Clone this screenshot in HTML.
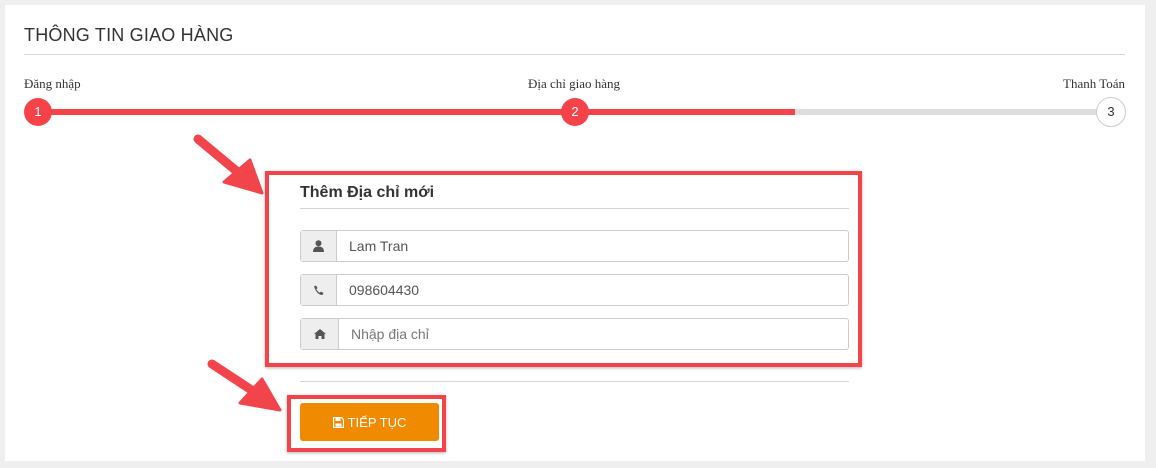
<!DOCTYPE html>
<html><head><meta charset="utf-8"><style>
*{box-sizing:border-box;margin:0;padding:0}
body{width:1156px;height:468px;background:#efefef;position:relative;overflow:hidden;font-family:"Liberation Sans",sans-serif;color:#333}
.card{position:absolute;left:5px;top:5px;width:1140px;height:456px;background:#fff}
.abs{position:absolute}
.title{left:24px;top:25px;font-size:18px;color:#333;letter-spacing:0.2px}
.hr{height:1px;background:#d5d5d5}
.lbl{top:76px;font-family:"Liberation Serif",serif;font-size:13px;color:#333}
.circ{width:28px;height:28px;border-radius:50%;background:#f6434a;color:#fff;font-size:13px;text-align:center;line-height:28px}
.inp{left:300px;width:549px;height:32px;border:1px solid #ccc;border-radius:3px;display:flex;background:#fff}
.inp .ad{width:36px;background:#eee;border-right:1px solid #ccc;display:flex;align-items:center;justify-content:center}
.inp .tx{padding-left:12px;line-height:30px;font-size:14px;color:#555}
</style></head><body>
<div class="card"></div>
<div class="abs title">THÔNG TIN GIAO HÀNG</div>
<div class="abs hr" style="left:24px;top:54px;width:1101px"></div>
<div class="abs lbl" style="left:24px">Đăng nhập</div>
<div class="abs lbl" style="left:528px">Địa chỉ giao hàng</div>
<div class="abs lbl" style="left:1063px">Thanh Toán</div>
<div class="abs" style="left:38px;top:109px;width:757px;height:6px;background:#f6434a"></div>
<div class="abs" style="left:795px;top:109px;width:305px;height:6px;background:#ddd"></div>
<div class="abs circ" style="left:24px;top:98px">1</div>
<div class="abs circ" style="left:561px;top:98px">2</div>
<div class="abs circ" style="left:1096px;top:97px;width:30px;height:30px;background:#fff;border:1px solid #ccc;color:#333;line-height:28px">3</div>

<div class="abs" style="left:265px;top:171px;width:597px;height:196px;border:4px solid #f2454b;box-shadow:0 1px 3px rgba(0,0,0,.3)"></div>
<div class="abs" style="left:300px;top:184px;font-size:16px;font-weight:bold;color:#333">Thêm Địa chỉ mới</div>
<div class="abs hr" style="left:300px;top:208px;width:549px"></div>
<div class="abs inp" style="top:230px"><div class="ad"><svg width="11" height="12" viewBox="0 0 11 12"><circle cx="5.5" cy="3.2" r="3" fill="#555"/><path d="M0 12 Q0 6.5 5.5 6.5 Q11 6.5 11 12Z" fill="#555"/></svg></div><div class="tx">Lam Tran</div></div>
<div class="abs inp" style="top:274px"><div class="ad"><svg width="11" height="11" viewBox="0 0 11 11"><path d="M1 1.5 L3 0.5 L4.5 3 L3.3 4.2 Q4.5 6.5 6.8 7.7 L8 6.5 L10.5 8 L9.5 10 Q4 10 1 1.5Z" fill="#555"/></svg></div><div class="tx">098604430</div></div>
<div class="abs inp" style="top:318px"><div class="ad" style="width:38px"><svg width="12" height="10" viewBox="0 0 12 10"><path d="M0 5 L6 0 L12 5 L10.5 5 L10.5 10 L7.5 10 L7.5 7 L4.5 7 L4.5 10 L1.5 10 L1.5 5Z" fill="#555"/></svg></div><div class="tx" style="color:#777">Nhập địa chỉ</div></div>
<div class="abs hr" style="left:300px;top:381px;width:549px"></div>

<div class="abs" style="left:287px;top:395px;width:159px;height:57px;border:4px solid #f2454b;box-shadow:0 1px 3px rgba(0,0,0,.3)"></div>
<div class="abs" style="left:300px;top:403px;width:139px;height:38px;background:#f08a00;border-radius:3px;color:#fff;font-size:13px;display:flex;align-items:center;justify-content:center;gap:4px"><svg width="11" height="11" viewBox="0 0 11 11"><path d="M0.5 0.5H8.5L10.5 2.5V10.5H0.5Z" fill="none" stroke="#fff" stroke-width="1.3"/><rect x="2.5" y="1" width="5" height="3" fill="#fff"/><rect x="2.5" y="6.5" width="6" height="3" fill="#fff"/></svg>TIẾP TỤC</div>

<svg class="abs" style="left:0;top:0" width="1156" height="468">
<g fill="#f2454b" stroke="#f2454b" stroke-linecap="round">
<line x1="198" y1="139" x2="240" y2="174" stroke-width="9"/>
<polygon points="262,193 224,182 250,160" stroke-width="3" stroke-linejoin="round"/>
<line x1="212" y1="364" x2="256" y2="393" stroke-width="9"/>
<polygon points="280,410 240,403 262,379" stroke-width="3" stroke-linejoin="round"/>
</g>
</svg>
</body></html>
